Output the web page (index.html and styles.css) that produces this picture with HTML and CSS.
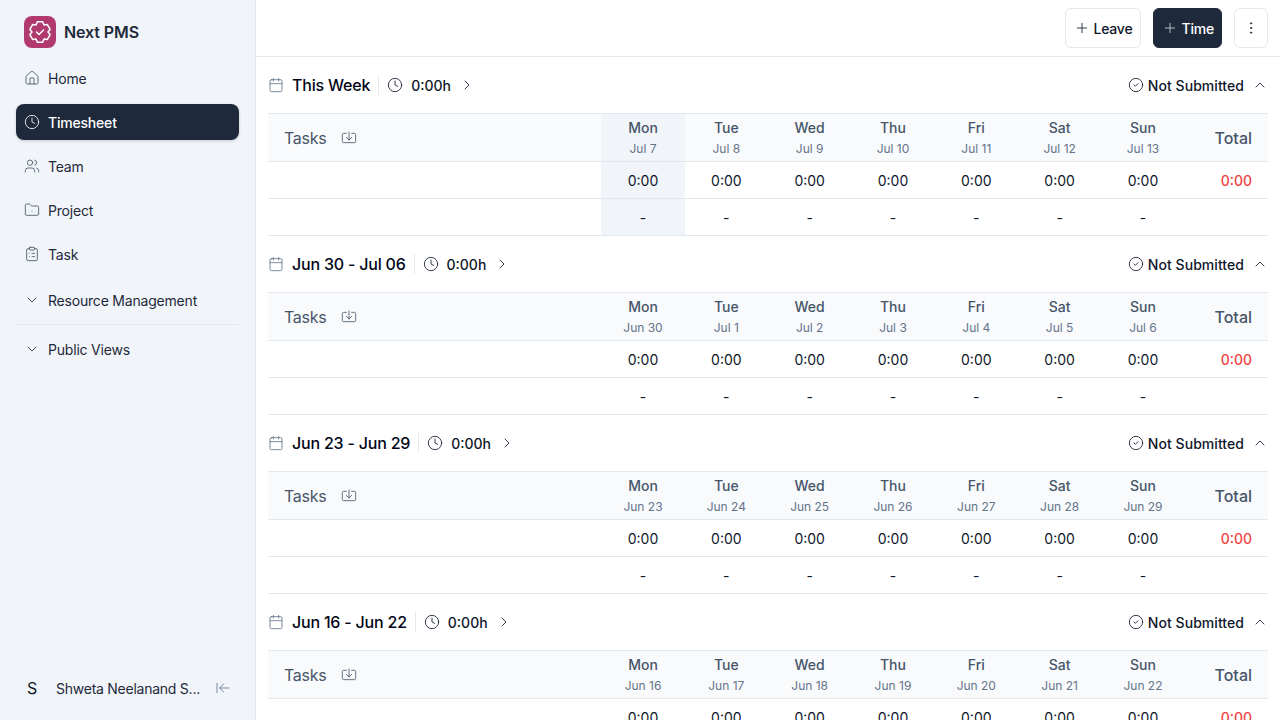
FILE: index.html
```html
<!DOCTYPE html>
<html lang="en">
<head>
    <meta charset="UTF-8">
    <title>Next PMS - Timesheet</title>
    <link rel="stylesheet" href="styles.css">
</head>
<body>
    <svg class="defs" width="0" height="0">
        <symbol id="i-calendar" viewBox="0 0 24 24"><path d="M8 2v4M16 2v4"/><rect x="3" y="4" width="18" height="18" rx="2"/><path d="M3 10h18"/></symbol>
        <symbol id="i-clock" viewBox="0 0 24 24"><circle cx="12" cy="12" r="10"/><path d="M12 6v6l4 2"/></symbol>
        <symbol id="i-right" viewBox="0 0 24 24"><path d="m9 18 6-6-6-6"/></symbol>
        <symbol id="i-up" viewBox="0 0 24 24"><path d="m18 15-6-6-6 6"/></symbol>
        <symbol id="i-down" viewBox="0 0 24 24"><path d="m6 9 6 6 6-6"/></symbol>
        <symbol id="i-check" viewBox="0 0 24 24"><circle cx="12" cy="12" r="10"/><path d="m9 12 2 2 4-4"/></symbol>
        <symbol id="i-import" viewBox="0 0 24 24"><path d="M12 3v12"/><path d="m8 11 4 4 4-4"/><path d="M8 5H4a2 2 0 0 0-2 2v10a2 2 0 0 0 2 2h16a2 2 0 0 0 2-2V7a2 2 0 0 0-2-2h-4"/></symbol>
        <symbol id="i-plus" viewBox="0 0 24 24"><path d="M5 12h14M12 5v14"/></symbol>
    </svg>

    <aside class="sidebar">
        <div class="brand">
            <span class="brand-logo">
                <svg viewBox="0 0 24 24"><path d="M8 5.07 9.28 1.86h5.44L16 5.07l3.42-.49 2.72 4.7L20 12l2.14 2.72-2.72 4.7-3.42-.49-1.28 3.21H9.28L8 18.93l-3.42.49-2.72-4.7L4 12 1.86 9.28l2.72-4.7z"/><path d="m8.5 12 2.5 2.5 4.5-4.5"/></svg>
            </span>
            <span class="brand-name">Next PMS</span>
        </div>

        <nav class="nav">
            <a class="nav-item">
                <svg class="icon" viewBox="0 0 24 24"><path d="M15 21v-8a1 1 0 0 0-1-1h-4a1 1 0 0 0-1 1v8"/><path d="M3 10a2 2 0 0 1 .7-1.5l7-6a2 2 0 0 1 2.6 0l7 6A2 2 0 0 1 21 10v9a2 2 0 0 1-2 2H5a2 2 0 0 1-2-2z"/></svg>
                Home
            </a>
            <a class="nav-item active">
                <svg class="icon"><use href="#i-clock"/></svg>
                Timesheet
            </a>
            <a class="nav-item">
                <svg class="icon" viewBox="0 0 24 24"><path d="M16 21v-2a4 4 0 0 0-4-4H6a4 4 0 0 0-4 4v2"/><circle cx="9" cy="7" r="4"/><path d="M22 21v-2a4 4 0 0 0-3-3.87"/><path d="M16 3.13a4 4 0 0 1 0 7.75"/></svg>
                Team
            </a>
            <a class="nav-item">
                <svg class="icon" viewBox="0 0 24 24"><path d="M12 14h.01"/><path d="M20 20a2 2 0 0 0 2-2V8a2 2 0 0 0-2-2h-7.9a2 2 0 0 1-1.69-.9L9.6 3.9A2 2 0 0 0 7.93 3H4a2 2 0 0 0-2 2v13a2 2 0 0 0 2 2z"/></svg>
                Project
            </a>
            <a class="nav-item">
                <svg class="icon" viewBox="0 0 24 24"><rect x="8" y="2" width="8" height="4" rx="1"/><path d="M16 4h2a2 2 0 0 1 2 2v14a2 2 0 0 1-2 2H6a2 2 0 0 1-2-2V6a2 2 0 0 1 2-2h2"/><path d="M12 11h4M12 16h4M8 11h.01M8 16h.01"/></svg>
                Task
            </a>
            <a class="nav-group first">
                <svg class="icon"><use href="#i-down"/></svg>
                Resource Management
            </a>
            <a class="nav-group">
                <svg class="icon"><use href="#i-down"/></svg>
                Public Views
            </a>
        </nav>

        <div class="user">
            <span class="user-initial">S</span>
            <span class="user-name">Shweta Neelanand S...</span>
            <svg class="icon" viewBox="0 0 24 24"><path d="M3 19V5"/><path d="m13 6-6 6 6 6"/><path d="M7 12h14"/></svg>
        </div>
    </aside>

    <main class="main">
        <header class="topbar">
            <button class="btn"><svg class="icon"><use href="#i-plus"/></svg>Leave</button>
            <button class="btn dark"><svg class="icon"><use href="#i-plus"/></svg>Time</button>
            <button class="btn more">
                <svg class="icon" viewBox="0 0 24 24"><circle cx="12" cy="12" r="1"/><circle cx="12" cy="5" r="1"/><circle cx="12" cy="19" r="1"/></svg>
            </button>
        </header>

        <section class="week">
            <div class="week-head">
                <svg class="icon muted"><use href="#i-calendar"/></svg>
                <h2>This Week</h2>
                <span class="divider"></span>
                <svg class="icon"><use href="#i-clock"/></svg>
                <span class="hours">0:00h</span>
                <svg class="icon"><use href="#i-right"/></svg>
                <span class="status"><svg class="icon"><use href="#i-check"/></svg>Not Submitted</span>
                <svg class="icon"><use href="#i-up"/></svg>
            </div>
            <table class="sheet">
                <thead>
                    <tr>
                        <th class="tasks"><span>Tasks</span><svg class="icon"><use href="#i-import"/></svg></th>
                        <th class="today">Mon<small>Jul 7</small></th>
                        <th>Tue<small>Jul 8</small></th>
                        <th>Wed<small>Jul 9</small></th>
                        <th>Thu<small>Jul 10</small></th>
                        <th>Fri<small>Jul 11</small></th>
                        <th>Sat<small>Jul 12</small></th>
                        <th>Sun<small>Jul 13</small></th>
                        <th class="total">Total</th>
                    </tr>
                </thead>
                <tbody>
                    <tr><td></td><td class="today">0:00</td><td>0:00</td><td>0:00</td><td>0:00</td><td>0:00</td><td>0:00</td><td>0:00</td><td class="total">0:00</td></tr>
                    <tr><td></td><td class="today">-</td><td>-</td><td>-</td><td>-</td><td>-</td><td>-</td><td>-</td><td></td></tr>
                </tbody>
            </table>
        </section>

        <section class="week">
            <div class="week-head">
                <svg class="icon muted"><use href="#i-calendar"/></svg>
                <h2>Jun 30 - Jul 06</h2>
                <span class="divider"></span>
                <svg class="icon"><use href="#i-clock"/></svg>
                <span class="hours">0:00h</span>
                <svg class="icon"><use href="#i-right"/></svg>
                <span class="status"><svg class="icon"><use href="#i-check"/></svg>Not Submitted</span>
                <svg class="icon"><use href="#i-up"/></svg>
            </div>
            <table class="sheet">
                <thead>
                    <tr>
                        <th class="tasks"><span>Tasks</span><svg class="icon"><use href="#i-import"/></svg></th>
                        <th>Mon<small>Jun 30</small></th>
                        <th>Tue<small>Jul 1</small></th>
                        <th>Wed<small>Jul 2</small></th>
                        <th>Thu<small>Jul 3</small></th>
                        <th>Fri<small>Jul 4</small></th>
                        <th>Sat<small>Jul 5</small></th>
                        <th>Sun<small>Jul 6</small></th>
                        <th class="total">Total</th>
                    </tr>
                </thead>
                <tbody>
                    <tr><td></td><td>0:00</td><td>0:00</td><td>0:00</td><td>0:00</td><td>0:00</td><td>0:00</td><td>0:00</td><td class="total">0:00</td></tr>
                    <tr><td></td><td>-</td><td>-</td><td>-</td><td>-</td><td>-</td><td>-</td><td>-</td><td></td></tr>
                </tbody>
            </table>
        </section>

        <section class="week">
            <div class="week-head">
                <svg class="icon muted"><use href="#i-calendar"/></svg>
                <h2>Jun 23 - Jun 29</h2>
                <span class="divider"></span>
                <svg class="icon"><use href="#i-clock"/></svg>
                <span class="hours">0:00h</span>
                <svg class="icon"><use href="#i-right"/></svg>
                <span class="status"><svg class="icon"><use href="#i-check"/></svg>Not Submitted</span>
                <svg class="icon"><use href="#i-up"/></svg>
            </div>
            <table class="sheet">
                <thead>
                    <tr>
                        <th class="tasks"><span>Tasks</span><svg class="icon"><use href="#i-import"/></svg></th>
                        <th>Mon<small>Jun 23</small></th>
                        <th>Tue<small>Jun 24</small></th>
                        <th>Wed<small>Jun 25</small></th>
                        <th>Thu<small>Jun 26</small></th>
                        <th>Fri<small>Jun 27</small></th>
                        <th>Sat<small>Jun 28</small></th>
                        <th>Sun<small>Jun 29</small></th>
                        <th class="total">Total</th>
                    </tr>
                </thead>
                <tbody>
                    <tr><td></td><td>0:00</td><td>0:00</td><td>0:00</td><td>0:00</td><td>0:00</td><td>0:00</td><td>0:00</td><td class="total">0:00</td></tr>
                    <tr><td></td><td>-</td><td>-</td><td>-</td><td>-</td><td>-</td><td>-</td><td>-</td><td></td></tr>
                </tbody>
            </table>
        </section>

        <section class="week">
            <div class="week-head">
                <svg class="icon muted"><use href="#i-calendar"/></svg>
                <h2>Jun 16 - Jun 22</h2>
                <span class="divider"></span>
                <svg class="icon"><use href="#i-clock"/></svg>
                <span class="hours">0:00h</span>
                <svg class="icon"><use href="#i-right"/></svg>
                <span class="status"><svg class="icon"><use href="#i-check"/></svg>Not Submitted</span>
                <svg class="icon"><use href="#i-up"/></svg>
            </div>
            <table class="sheet">
                <thead>
                    <tr>
                        <th class="tasks"><span>Tasks</span><svg class="icon"><use href="#i-import"/></svg></th>
                        <th>Mon<small>Jun 16</small></th>
                        <th>Tue<small>Jun 17</small></th>
                        <th>Wed<small>Jun 18</small></th>
                        <th>Thu<small>Jun 19</small></th>
                        <th>Fri<small>Jun 20</small></th>
                        <th>Sat<small>Jun 21</small></th>
                        <th>Sun<small>Jun 22</small></th>
                        <th class="total">Total</th>
                    </tr>
                </thead>
                <tbody>
                    <tr><td></td><td>0:00</td><td>0:00</td><td>0:00</td><td>0:00</td><td>0:00</td><td>0:00</td><td>0:00</td><td class="total">0:00</td></tr>
                </tbody>
            </table>
        </section>
    </main>
</body>
</html>
```
FILE: styles.css
```css
* { box-sizing: border-box; }

html, body { height: 100%; }

body {
    margin: 0;
    display: flex;
    overflow: hidden;
    font-family: Inter, "Noto Sans", sans-serif;
    color: #0f172a;
    background: #fff;
}

.defs { position: absolute; }

.icon {
    width: 16px;
    height: 16px;
    flex: none;
    fill: none;
    stroke: currentColor;
    stroke-width: 1.25;
    stroke-linecap: round;
    stroke-linejoin: round;
}
.icon.muted { color: #64748b; }

/* sidebar */
.sidebar {
    width: 256px;
    flex: none;
    display: flex;
    flex-direction: column;
    padding: 16px;
    background: #f1f5f9;
    border-right: 1px solid #e2e8f0;
    color: #1e293b;
}

.brand {
    display: flex;
    align-items: center;
    gap: 8px;
    height: 32px;
    padding-left: 8px;
}
.brand-logo {
    width: 32px;
    height: 32px;
    display: flex;
    align-items: center;
    justify-content: center;
    border-radius: 8px;
    background: #b03a6e;
}
.brand-logo svg {
    width: 24px;
    height: 24px;
    fill: none;
    stroke: #fff;
    stroke-width: 1.5;
    stroke-linecap: round;
    stroke-linejoin: round;
}
.brand-name {
    font-size: 16px;
    font-weight: 600;
    letter-spacing: -0.1px;
    color: #1e293b;
}

.nav {
    display: flex;
    flex-direction: column;
    flex: 1;
    margin-top: 12px;
    font-size: 14px;
    letter-spacing: -0.2px;
}
.nav-item, .nav-group {
    display: flex;
    align-items: center;
    gap: 8px;
    height: 36px;
    padding: 0 8px;
}
.nav-item {
    margin-bottom: 8px;
    border-radius: 8px;
}
.nav-item .icon { color: #475569; }
.nav-item.active {
    background: #1e293b;
    color: #fff;
    font-weight: 500;
    box-shadow: 0 1px 3px rgba(15, 23, 42, 0.2);
}
.nav-item.active .icon { color: #fff; }
.nav-group .icon {
    margin-top: -1px;
    color: #1e293b;
}
.nav-group.first {
    height: 43px;
    margin-top: 2px;
    margin-bottom: 6px;
    padding-bottom: 6px;
    border-bottom: 1px solid #e2e8f0;
}

.user {
    display: flex;
    align-items: center;
    height: 32px;
    padding: 0 8px;
    font-size: 14px;
    letter-spacing: -0.25px;
}
.user-initial {
    width: 16px;
    font-size: 16px;
    text-align: center;
    color: #0f172a;
}
.user-name {
    flex: 1;
    margin-left: 16px;
    white-space: nowrap;
}
.user .icon { color: #64748b; }

/* main */
.main {
    flex: 1;
    min-width: 0;
    overflow: hidden;
}

.topbar {
    display: flex;
    justify-content: flex-end;
    gap: 12px;
    height: 57px;
    padding: 8px 12px;
    border-bottom: 1px solid #e2e8f0;
}

.btn {
    display: flex;
    align-items: center;
    gap: 3px;
    height: 40px;
    padding: 0 8px;
    font: 500 14px Inter, "Noto Sans", sans-serif;
    letter-spacing: -0.2px;
    color: #0f172a;
    background: #fff;
    border: 1px solid #e2e8f0;
    border-radius: 6px;
}
.btn.dark {
    padding-right: 7px;
    background: #1e293b;
    border-color: #1e293b;
    color: #fff;
}
.btn.dark .icon { color: #cbd5e1; }
.btn.more {
    width: 34px;
    padding: 0;
    justify-content: center;
}

.week { padding: 0 12px; }

.week-head {
    display: flex;
    align-items: center;
    height: 56px;
}
.week-head h2 {
    margin: 0 0 0 8px;
    font-size: 16px;
    font-weight: 500;
    letter-spacing: -0.2px;
    color: #020617;
}
.divider {
    width: 1px;
    height: 20px;
    margin: 0 8px;
    background: #e2e8f0;
}
.hours {
    margin: 0 8px;
    font-size: 14px;
    font-weight: 500;
}
.status {
    display: flex;
    align-items: center;
    gap: 4px;
    margin-left: auto;
    margin-right: 8px;
    font-size: 14px;
    font-weight: 500;
    letter-spacing: 0.05px;
    color: #0f172a;
}

.sheet {
    width: 1000px;
    table-layout: fixed;
    border-collapse: collapse;
}
.sheet th:first-child, .sheet td:first-child { width: 333.33px; }
.sheet th, .sheet td {
    padding: 0;
    text-align: center;
    border-top: 1px solid #e2e8f0;
    border-bottom: 1px solid #e2e8f0;
}
.sheet thead tr { height: 48px; }
.sheet tbody tr { height: 37px; }
.sheet th {
    background: #f8fafc;
    font-size: 14px;
    font-weight: 500;
    color: #475569;
}
.sheet th small {
    display: block;
    margin-top: 5px;
    font-size: 12px;
    font-weight: 400;
    color: #64748b;
}
.sheet td {
    font-size: 14px;
    color: #0f172a;
}

.sheet th.tasks {
    padding-left: 16px;
    padding-bottom: 2px;
    text-align: left;
    font-size: 16px;
    font-weight: 400;
    letter-spacing: -0.3px;
    color: #475569;
}
.sheet th.tasks span, .sheet th.tasks .icon { vertical-align: middle; }
.sheet th.tasks .icon {
    margin-left: 15px;
    margin-top: 1px;
}

.sheet th.total {
    padding-right: 16px;
    text-align: right;
    font-size: 16px;
}
.sheet td.total {
    padding-right: 16px;
    text-align: right;
    font-weight: 500;
    color: #ef4444;
}
.sheet .today { background: #f1f5f9; }
```
